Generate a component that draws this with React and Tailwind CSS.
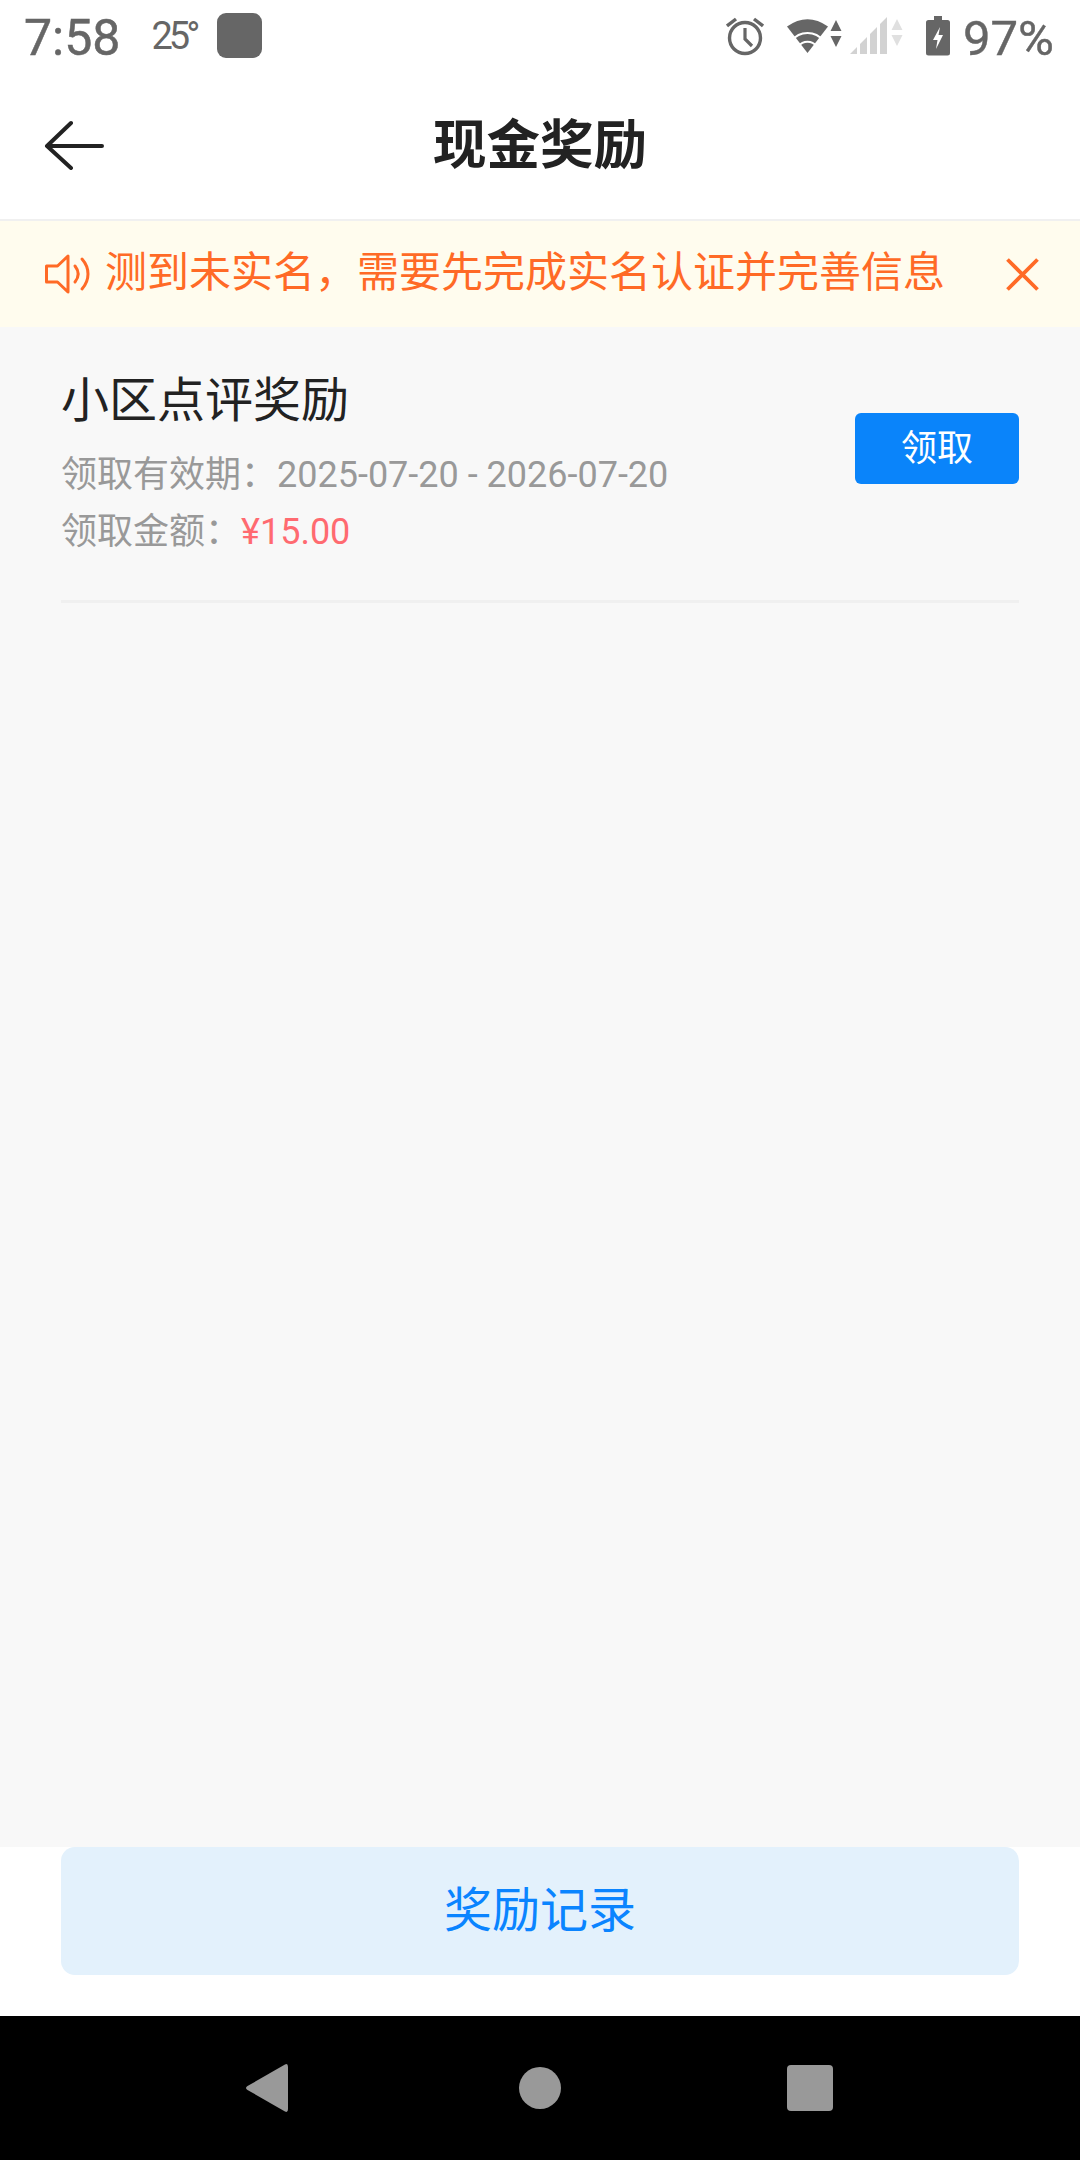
const FONT = "font-['Roboto','Noto_Sans_CJK_SC',sans-serif]";

function StatusBar() {
  return (
    <div className="flex h-[72px] items-start bg-white text-[#666666]">
      <span className="ml-[24px] mt-[10px] text-[50px] leading-[57px] font-normal [-webkit-text-stroke:0.5px_#666666]">7:58</span>
      <span className="ml-[31px] mt-[17px] text-[38px] leading-[38px] font-normal tracking-[-4px]">25°</span>
      <div className="ml-[21px] mt-[13px] h-[45px] w-[45px] rounded-[9px] bg-[#666666]" />
      <div className="ml-auto mt-[16px] flex items-start">
        <svg className="h-[40px] w-[38px]" viewBox="0 0 38 40" fill="none" stroke="#666666">
          <circle cx="19" cy="22" r="15.5" strokeWidth="3.4" />
          <path d="M19 12v11l7 7" strokeWidth="3.2" />
          <path d="M1 10l9-7M37 10l-9-7" strokeWidth="3.4" />
        </svg>
        <svg className="ml-[23px] h-[40px] w-[56px]" viewBox="0 0 56 40" fill="#666666">
          <path d="M0 10.500Q20.500-4 41 10.500L20.500 37z" />
          <path d="M4.500 25A20 20 0 0 1 36.500 25M11.500 30.200A11.300 11.300 0 0 1 29.500 30.200" fill="none" stroke="#ffffff" strokeWidth="2" />
          <path d="M49 4l5.500 11h-11zM49 31l-5.500-11h11z" />
        </svg>
        <svg className="ml-[7px] h-[40px] w-[54px]" viewBox="0 0 54 40" fill="#d2d2d2">
          <path d="M0 38l7-7v7zM10 38V28l7-7v17zM20 38V18l7-7v27zM30 38V8l7-7v37z" />
          <path d="M47 3l5.500 11h-11zM47 30l-5.500-11h11z" fill="#e0e0e0" />
        </svg>
        <svg className="ml-[22px] h-[40px] w-[24px]" viewBox="0 0 24 40" fill="#666666">
          <path d="M8 0h8v4h5.500q2.500 0 2.500 2.500V37q0 2.500-2.500 2.500h-19Q0 39.500 0 37V6.500Q0 4 2.500 4H8z" />
          <path d="M14 11l-7 13h4.500l-1.500 9 7-14h-4.500z" fill="#ffffff" />
        </svg>
        <span className="ml-[13px] mr-[26px] mt-[-6px] text-[49px] leading-[57px] [-webkit-text-stroke:0.4px_#666666]">97%</span>
      </div>
    </div>
  );
}

function Header() {
  return (
    <div className="relative flex h-[149px] items-center justify-center border-b-2 border-[#f0f0f0] bg-white">
      <svg className="absolute left-[44px] top-[48px] h-[50px] w-[62px]" viewBox="0 0 62 50" fill="none" stroke="#222222" strokeWidth="4" strokeLinecap="round" strokeLinejoin="round">
        <path d="M58 26H3M27 3L3 26l24 22" />
      </svg>
      <span className="text-[53.500px] leading-[60px] font-bold text-[#222222]">现金奖励</span>
    </div>
  );
}

function Banner() {
  return (
    <div className="flex h-[106px] items-center bg-[#fffcee] text-[#ff6a26]">
      <svg className="ml-[45px] h-[40px] w-[46px]" viewBox="0 0 46 40" fill="none" stroke="#ff6a26" strokeWidth="3">
        <path d="M1.500 12h11L23 2v36L12.500 28h-11z" strokeLinejoin="round" />
        <path d="M30 12c4 5 4 11 0 16M37 5c8 9 8 21 0 30" strokeLinecap="round" />
      </svg>
      <span className="mb-[2px] ml-[14px] whitespace-nowrap text-[42px] leading-[50px]">测到未实名，需要先完成实名认证并完善信息</span>
      <svg className="ml-auto mr-[41px] h-[33px] w-[33px]" viewBox="0 0 33 33" stroke="#ff6a26" strokeWidth="3.800">
        <path d="M1.500 1.500l30 30M31.500 1.500l-30 30" />
      </svg>
    </div>
  );
}

function Reward() {
  return (
    <div className="mx-[61px] flex h-[276px] items-start justify-between border-b-[3px] border-[#f0f0f0]">
      <div className="flex flex-col">
        <span className="mt-[46px] text-[48px] leading-[56px] text-[#222222]">小区点评奖励</span>
        <span className="mt-[18px] text-[36px] leading-[56.500px] text-[#999999]">领取有效期：2025-07-20 - 2026-07-20</span>
        <span className="text-[36px] leading-[56.500px] text-[#999999]">领取金额：<span className="text-[#ff6a70]">¥15.00</span></span>
      </div>
      <button className="mt-[86px] flex h-[71px] w-[164px] items-center justify-center rounded-[6px] bg-[#0a84fa] text-[36px] text-white">领取</button>
    </div>
  );
}

function NavBar() {
  return (
    <div className="flex h-[144px] items-start bg-black">
      <svg className="ml-[246px] mt-[48px] h-[48px] w-[42px]" viewBox="0 0 42 48" fill="#999999">
        <path d="M39 .500Q42-1 42 3v42q0 4-3 2.500L1.500 26q-3-2 0-4z" />
      </svg>
      <div className="ml-[231px] mt-[51px] h-[42px] w-[42px] rounded-full bg-[#999999]" />
      <div className="ml-[226px] mt-[49px] h-[46px] w-[46px] rounded-[4px] bg-[#999999]" />
    </div>
  );
}

export default function App() {
  return (
    <div className={`flex h-[2160px] w-[1080px] flex-col overflow-hidden bg-white ${FONT}`}>
      <StatusBar />
      <Header />
      <Banner />
      <div className="h-[1520px] bg-[#f8f8f8]">
        <Reward />
      </div>
      <div className="flex h-[169px] items-start bg-white px-[61px]">
        <button className="flex h-[128px] w-full items-center justify-center rounded-[14px] bg-[#e3f1fc] text-[48px] text-[#0a84ff]">奖励记录</button>
      </div>
      <NavBar />
    </div>
  );
}
